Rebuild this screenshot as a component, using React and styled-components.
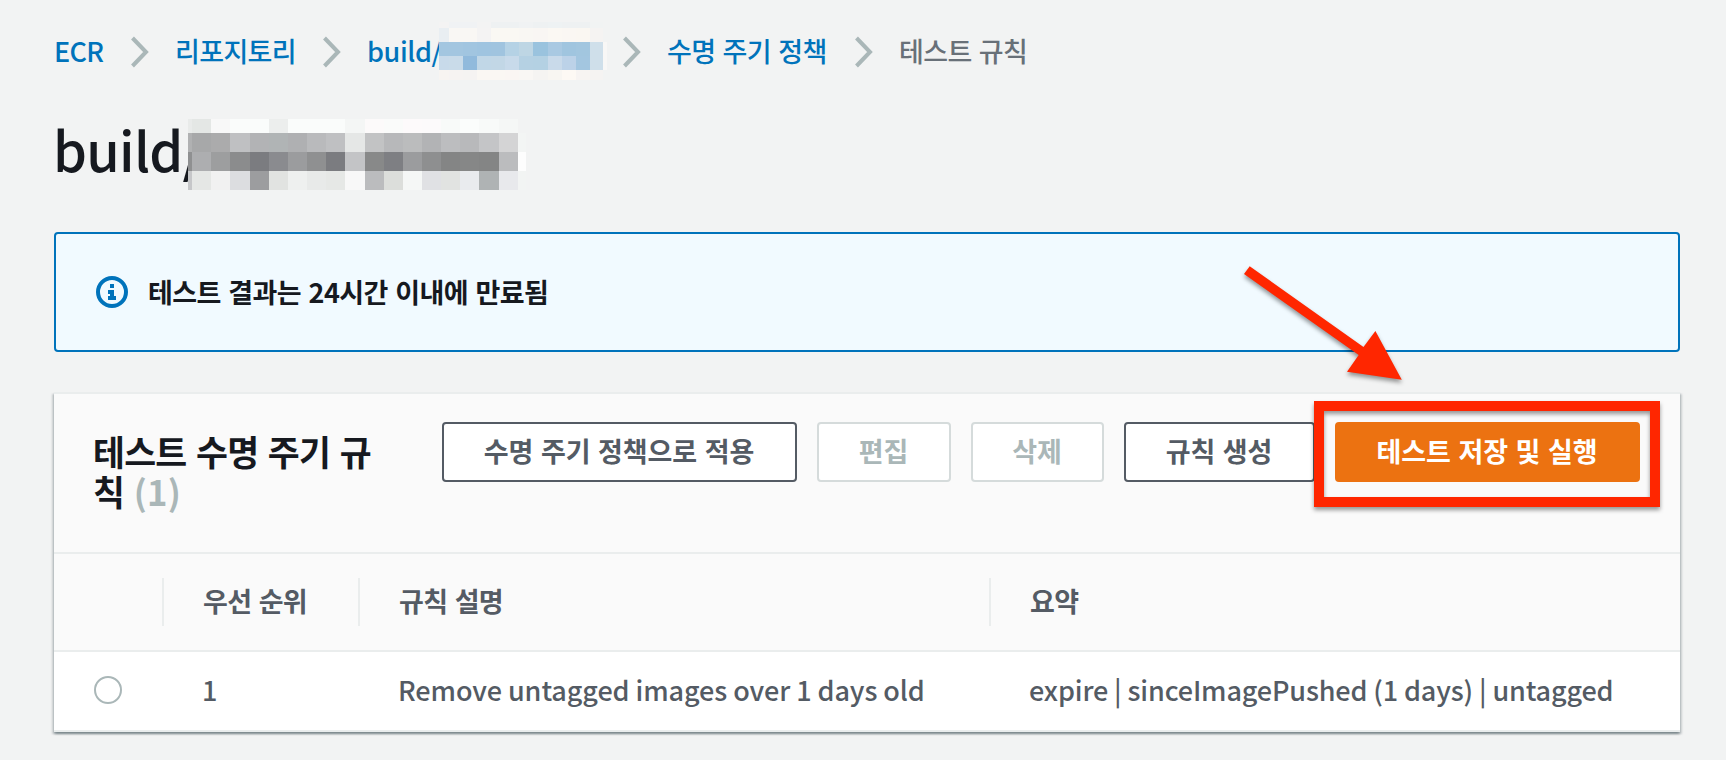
import React from "react";
import styled, { createGlobalStyle, css } from "styled-components";

const GlobalStyle = createGlobalStyle`
  * { box-sizing: border-box; }
  body {
    margin: 0;
    background: #f2f3f3;
    color: #16191f;
    font-family: "Noto Sans CJK KR", "Noto Sans", sans-serif;
    font-size: 27px;
    font-weight: 500;
    line-height: 40px;
    letter-spacing: -0.65px;
    word-spacing: 1.8px;
    overflow: hidden;
  }
`;

const Page = styled.main`
  position: relative;
  width: 1726px;
  height: 760px;
  padding: 31px 46px 0 54px;
`;

const latin = css`
  letter-spacing: ${(p) => p.$spacing || 0}px;
  word-spacing: 0;
`;

const Breadcrumbs = styled.nav`
  display: flex;
  align-items: center;
  height: 40px;
`;

const Crumb = styled.a`
  flex: none;
  position: relative;
  width: ${(p) => p.$width}px;
  color: ${(p) => (p.$current ? "#687078" : "#0073bb")};
  white-space: nowrap;
  ${(p) => p.$latin && latin}
`;

const ChevronIcon = styled.svg`
  flex: none;
  width: 18px;
  height: 32px;
  margin: 2px 26px 0 27px;
  fill: none;
  stroke: #aab7b8;
  stroke-width: 4;
`;

const Redaction = styled.svg`
  position: absolute;
  left: ${(p) => p.$left}px;
  top: ${(p) => p.$top}px;
  shape-rendering: crispEdges;
`;

const Title = styled.h1`
  position: relative;
  margin: 38px 0 0 -1px;
  height: 80px;
  font-size: 54px;
  line-height: 80px;
  font-weight: 500;
  letter-spacing: -0.7px;
`;

const Alert = styled.section`
  display: flex;
  align-items: center;
  gap: 20px;
  height: 120px;
  margin-top: 43px;
  padding: 0 40px;
  border: 2px solid #0073bb;
  border-radius: 4px;
  background: #f1faff;
  font-weight: 700;
  letter-spacing: -0.55px;
`;

const InfoIcon = styled.svg`
  width: 32px;
  height: 32px;
  fill: none;
  stroke: #0073bb;
  stroke-width: 2;
`;

const Panel = styled.section`
  height: 340px;
  margin-top: 40px;
  border-top: 2px solid #eaeded;
  background: #fff;
  box-shadow: 0 2px 2px 0 rgba(0, 28, 36, 0.3), 2px 2px 2px 0 rgba(0, 28, 36, 0.15),
    -2px 2px 2px 0 rgba(0, 28, 36, 0.15);
`;

const PanelHeader = styled.header`
  display: flex;
  justify-content: space-between;
  height: 160px;
  padding: 28px 40px 0;
  border-bottom: 2px solid #eaeded;
  background: #fafafa;
`;

const PanelTitle = styled.h2`
  margin: 9px 0 0 -1px;
  width: 300px;
  font-size: 34.7px;
  line-height: 40px;
  letter-spacing: -0.75px;
  word-spacing: 2.4px;
`;

const Count = styled.span`
  color: #aab7b8;
  letter-spacing: 0.3px;
`;

const Actions = styled.div`
  display: flex;
  gap: 20px;
`;

const tones = {
  normal: css`border-color: #545b64; background: #fff; color: #545b64;`,
  disabled: css`border-color: #d5dbdb; background: #fff; color: #aab7b8;`,
  primary: css`border-color: #ec7211; background: #ec7211; color: #fff;`,
};

const Button = styled.button`
  width: ${(p) => p.$width}px;
  height: 60px;
  padding: 0 1px 2px 0;
  border: 2px solid;
  border-radius: 4px;
  font: inherit;
  font-weight: 700;
  letter-spacing: -0.1px;
  word-spacing: 1.6px;
  white-space: nowrap;
  ${(p) => tones[p.$tone || "normal"]}
`;

const Row = styled.div`
  display: grid;
  grid-template-columns: 110px 196px 631px 1fr;
  align-items: center;
  height: ${(p) => (p.$head ? 98 : 80)}px;
  border-bottom: 2px solid #eaeded;
  background: ${(p) => (p.$head ? "#fafafa" : "#fff")};
  color: #545b64;
`;

const HeadCell = styled.div`
  height: 48px;
  padding-left: 39px;
  line-height: 46px;
  font-weight: 700;
  border-right: ${(p) => (p.$last ? 0 : 2)}px solid #eaeded;
`;

const Cell = styled.div`
  padding: 0 0 2px 38px;
  white-space: nowrap;
  ${latin}
`;

const Radio = styled.span`
  display: block;
  width: 28px;
  height: 28px;
  margin-left: 2px;
  border: 2px solid #aab7b8;
  border-radius: 50%;
  background: #fff;
`;

const Annotation = styled.svg`
  position: absolute;
  left: 0;
  top: 0;
  pointer-events: none;
  fill: #ff2600;
  filter: drop-shadow(0 3px 2px rgba(0, 0, 0, 0.4));
`;

const Chevron = () => (
  <ChevronIcon viewBox="0 0 18 32">
    <path d="M1.5 2 15 16 1.5 30" />
  </ChevronIcon>
);

function Mosaic({ left, top, xs, ys, rows }) {
  const w = xs[xs.length - 1];
  const h = ys[ys.length - 1];
  return (
    <Redaction $left={left} $top={top} width={w} height={h} aria-hidden="true">
      {rows.map((row, r) =>
        row.split(" ").map((c, i) => (
          <rect key={`${r}-${i}`} x={xs[i]} y={ys[r]} width={xs[i + 1] - xs[i]} height={ys[r + 1] - ys[r]} fill={`#${c}`} />
        ))
      )}
    </Redaction>
  );
}

const crumbMosaic = {
  xs: [0, 10, 24, 38, 52, 66, 80, 94, 109, 123, 137, 151, 164, 168],
  ys: [0, 6, 20, 34, 48, 58],
  rows: [
    "f4f3f3 f0f2f4 f0f2f4 f3f3f3 eef1f2 eef1f2 f0f2f3 eef1f2 eef2f3 eef1f2 eef1f2 f1f3f3 f2f3f3",
    "e9eef2 f9f7f4 f9f7f4 f4f3f3 faf8f3 faf8f3 f9f7f3 f9f6f3 fbf8f3 faf7f3 faf7f2 f5f3f2 f2f3f3",
    "a3c6e0 a3c6e0 a1c5e0 9fc4e0 a0c4df b5d2e5 bed6e4 9ac3de a9c9e2 a0c5df a2c6df cfdfea f8f7f6",
    "c8daea c9dbe9 91badc c1d7e7 c2d7e6 c8daea b5d1e3 b4d1e3 c9daea bcd2e8 a3c6e0 cfdfea f8f7f6",
    "f7f4f1 f6f3f2 f5f3f2 faf7f3 faf7f3 faf6f3 f9f7f4 f5f4f2 f8f6f2 fdf9f4 f7f4f2 f5f3f2 f2f3f3",
  ],
};

const titleMosaic = {
  xs: [0, 4, 23, 42, 62, 81, 100, 119, 138, 157, 177, 196, 215, 234, 253, 272, 291, 311, 330, 338],
  ys: [0, 14, 33, 52, 71],
  rows: [
    "e9ebea e4e7e5 f8f8f8 fafcfb fafcfb eceeed fafcfb fafcfb fafcfb f4f6f5 fcfafa fafbfa fdfafb fcfafb f8faf9 fbfdfc f8faf9 f5f7f6 f2f3f3",
    "b0b1b2 a7a8a9 ababac bfc0c2 b2b3b5 b0b4b5 afb0b2 b9babc bfc0c2 e5e7e6 c2c3c4 b7b8ba bbbcbd b2b3b5 bcbdbf b8b9bb c4c5c7 d4d4d5 f3f5f4",
    "8f9091 adaeb0 9d9e9f 8b8c8d 7b7c80 8a8b8f 9b9c9e 8f9091 7b7c80 c3c4c6 888989 7e7f83 9b9c9e 8e8f90 848585 868787 848585 bbbcbe fdfdfd",
    "c6c7c9 e5e7e5 f1f1f1 dcdde0 9c9d9f e1e3e1 eef0ef e8eae9 e6e8e6 f8f8f8 bbbcbe dcdedb f5f7f6 e0e1e4 e1e3e1 e9ebee afb3b4 e8e9ec f2f4f3",
  ],
};

export default function App() {
  return (
    <>
      <GlobalStyle />
      <Page>
        <Breadcrumbs>
          <Crumb $width={50} $latin $spacing={-0.7}>ECR</Crumb>
          <Chevron />
          <Crumb $width={121}>리포지토리</Crumb>
          <Chevron />
          <Crumb $width={229} $latin $spacing={-0.4}>
            build/
            <Mosaic left={72} top={-9} {...crumbMosaic} />
          </Crumb>
          <Chevron />
          <Crumb $width={161}>수명 주기 정책</Crumb>
          <Chevron />
          <Crumb $width={130} $current>테스트 규칙</Crumb>
        </Breadcrumbs>

        <Title>
          build/
          <Mosaic left={135} top={10} {...titleMosaic} />
        </Title>

        <Alert>
          <InfoIcon viewBox="0 0 16 16">
            <circle cx="8" cy="8" r="7" />
            <path d="M6 8h2v3M6 11h4M8 4v2" />
          </InfoIcon>
          <span>테스트 결과는 24시간 이내에 만료됨</span>
        </Alert>

        <Panel>
          <PanelHeader>
            <PanelTitle>
              테스트 수명 주기 규<br />칙 <Count>(1)</Count>
            </PanelTitle>
            <Actions>
              <Button $width={355}>수명 주기 정책으로 적용</Button>
              <Button $width={134} $tone="disabled">편집</Button>
              <Button $width={133} $tone="disabled">삭제</Button>
              <Button $width={191}>규칙 생성</Button>
              <Button $width={305} $tone="primary">테스트 저장 및 실행</Button>
            </Actions>
          </PanelHeader>
          <Row $head>
            <HeadCell />
            <HeadCell>우선 순위</HeadCell>
            <HeadCell>규칙 설명</HeadCell>
            <HeadCell $last>요약</HeadCell>
          </Row>
          <Row>
            <Cell><Radio /></Cell>
            <Cell>1</Cell>
            <Cell $spacing={-0.08}>Remove untagged images over 1 days old</Cell>
            <Cell $spacing={-0.14}>expire | sinceImagePushed (1 days) | untagged</Cell>
          </Row>
        </Panel>

        <Annotation width="1726" height="760" viewBox="0 0 1726 760">
          <path d="M1249.7 266.3 1363.5 347 1375.4 331 1401.8 379.7 1347 371.7 1358.7 355 1244 274Z" />
          <path fillRule="evenodd" d="M1314 401H1660V507H1314ZM1324 411V497H1650V411Z" />
        </Annotation>
      </Page>
    </>
  );
}
